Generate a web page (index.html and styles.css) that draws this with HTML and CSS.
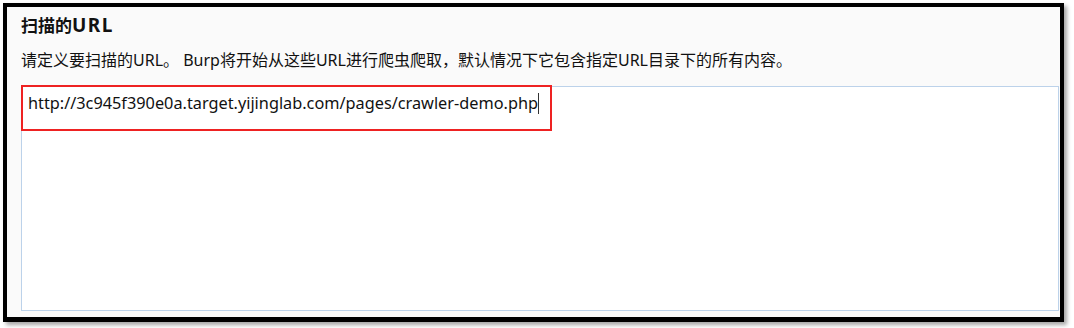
FILE: index.html
```html
<!DOCTYPE html>
<html lang="zh">
<head>
<meta charset="utf-8">
<link rel="stylesheet" href="styles.css">
</head>
<body>
<div class="frame">
  <div class="panel">
    <h2 class="title">扫描的<span class="latin">URL</span></h2>
    <p class="desc">请定义要扫描的URL。 Burp将开始从这些URL进行爬虫爬取，默认情况下它包含指定URL目录下的所有内容。</p>
    <div class="area">
      <div class="line">http://3c945f390e0a.target.yijinglab.com/pages/crawler-demo.php<span class="caret"></span></div>
      <div class="highlight"></div>
    </div>
  </div>
</div>
</body>
</html>
```
FILE: styles.css
```css
html, body { margin: 0; padding: 0; background: #ffffff; }
body { width: 1074px; height: 328px; overflow: hidden; }
.frame {
  margin: 3px 0 0 3px;
  width: 1053px;
  height: 310px;
  border: 4px solid #000;
  border-bottom-width: 5px;
  background: #fafafa;
  box-shadow: 3px 3px 4px rgba(0,0,0,0.35);
  font-family: "Noto Sans", "Noto Sans CJK SC", sans-serif;
  color: #111;
}
.panel { padding: 6px 1px 6px 14px; display: flex; flex-direction: column; height: 298px; }
.title { margin: 0; font-size: 17px; font-weight: bold; line-height: 24px; }
.title .latin { font-size: 19px; letter-spacing: 1.5px; }
.desc { margin: 11px 0 0 0; font-size: 16px; line-height: 22px; }
.area {
  position: relative;
  margin-top: 15px;
  flex: 1;
  background: #fff;
  border: 1px solid #bcd2ea;
}
.line { padding: 4px 0 0 6px; font-size: 16.3px; line-height: 24px; color: #111; }
.caret { display: inline-block; width: 1px; height: 21px; background: #333; vertical-align: -5px; }
.highlight {
  position: absolute;
  left: -1px; top: -2px;
  width: 527px; height: 42px;
  border: 2px solid #ee2222;
}
```
